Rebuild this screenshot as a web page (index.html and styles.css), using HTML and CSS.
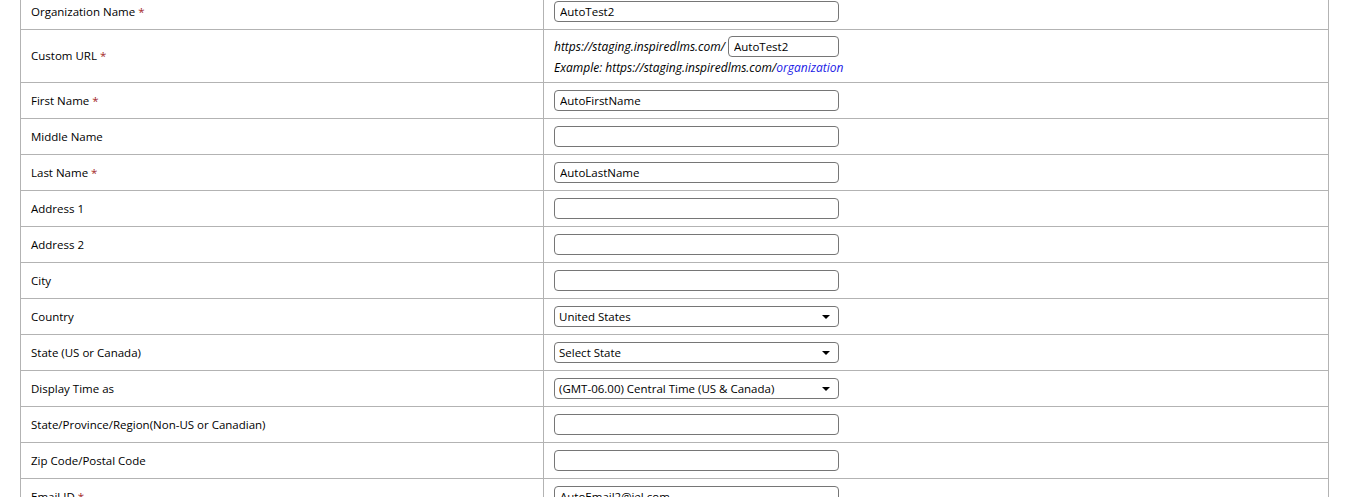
FILE: index.html
```html
<!DOCTYPE html>
<html>
<head>
<meta charset="utf-8">
<link rel="stylesheet" href="styles.css">
</head>
<body>
<div class="page">
<table class="form">
<tr><td class="lbl">Organization Name <span class="req">*</span></td><td class="val"><input class="txt" value="AutoTest2"></td></tr>
<tr class="tall"><td class="lbl">Custom URL <span class="req">*</span></td><td class="val">
<div class="url"><span class="it">https://staging.inspiredlms.com/</span><input class="txt short" value="AutoTest2"></div>
<div class="ex it">Example: https://staging.inspiredlms.com/<span class="link">organization</span></div>
</td></tr>
<tr><td class="lbl">First Name <span class="req">*</span></td><td class="val"><input class="txt" value="AutoFirstName"></td></tr>
<tr><td class="lbl">Middle Name</td><td class="val"><input class="txt" value=""></td></tr>
<tr><td class="lbl">Last Name <span class="req">*</span></td><td class="val"><input class="txt" value="AutoLastName"></td></tr>
<tr><td class="lbl">Address 1</td><td class="val"><input class="txt" value=""></td></tr>
<tr><td class="lbl">Address 2</td><td class="val"><input class="txt" value=""></td></tr>
<tr><td class="lbl">City</td><td class="val"><input class="txt" value=""></td></tr>
<tr><td class="lbl">Country</td><td class="val"><span class="sel"><select><option>United States</option></select></span></td></tr>
<tr><td class="lbl">State (US or Canada)</td><td class="val"><span class="sel"><select><option>Select State</option></select></span></td></tr>
<tr><td class="lbl">Display Time as</td><td class="val"><span class="sel"><select><option>(GMT-06.00) Central Time (US &amp; Canada)</option></select></span></td></tr>
<tr><td class="lbl">State/Province/Region(Non-US or Canadian)</td><td class="val"><input class="txt" value=""></td></tr>
<tr><td class="lbl">Zip Code/Postal Code</td><td class="val"><input class="txt" value=""></td></tr>
<tr><td class="lbl">Email ID <span class="req">*</span></td><td class="val"><input class="txt" value="AutoEmail2@iel.com"></td></tr>
</table>
</div>
</body>
</html>
```
FILE: styles.css
```css
html, body {
  margin: 0;
  padding: 0;
  background: #fff;
  overflow: hidden;
}
body {
  font-family: "Open Sans", "Noto Sans", sans-serif;
  font-size: 11.5px;
  color: #000;
}
.page {
  padding: 0 20px;
  margin-top: -7px;
}
.form {
  width: 100%;
  border-collapse: collapse;
  table-layout: fixed;
}
.form td {
  border: 1px solid #b3b3b3;
  height: 35px;
  padding: 0 10px 1px;
  vertical-align: middle;
  box-sizing: border-box;
}
.form td.val { padding-bottom: 0; }
.form tr { height: 36px; }
.form tr.tall { height: 53px; }
.form td.lbl { width: 523px; }
.req { color: #a52a2a; }
.txt {
  box-sizing: border-box;
  width: 285px;
  height: 21px;
  border: 1px solid #767676;
  border-radius: 4px;
  padding: 0 5px;
  font: inherit;
  color: #000;
  outline: none;
  display: block;
}
.txt.short {
  width: 111px;
  display: inline-block;
  margin-left: 3px;
}
.url {
  display: flex;
  align-items: center;
}
.it { font-style: italic; font-size: 12px; }
.ex { margin-top: 2px; }
.link { color: #1a1ae6; }
.sel {
  position: relative;
  display: block;
  width: 285px;
}
.sel select {
  appearance: none;
  -webkit-appearance: none;
  box-sizing: border-box;
  width: 285px;
  height: 21px;
  border: 1px solid #767676;
  border-radius: 4px;
  padding: 0 20px 0 4px;
  font: inherit;
  color: #000;
  background: #fff;
  outline: none;
}
.sel::after {
  content: "";
  position: absolute;
  right: 9px;
  top: 9px;
  border-left: 4px solid transparent;
  border-right: 4px solid transparent;
  border-top: 4px solid #000;
  pointer-events: none;
}
```
